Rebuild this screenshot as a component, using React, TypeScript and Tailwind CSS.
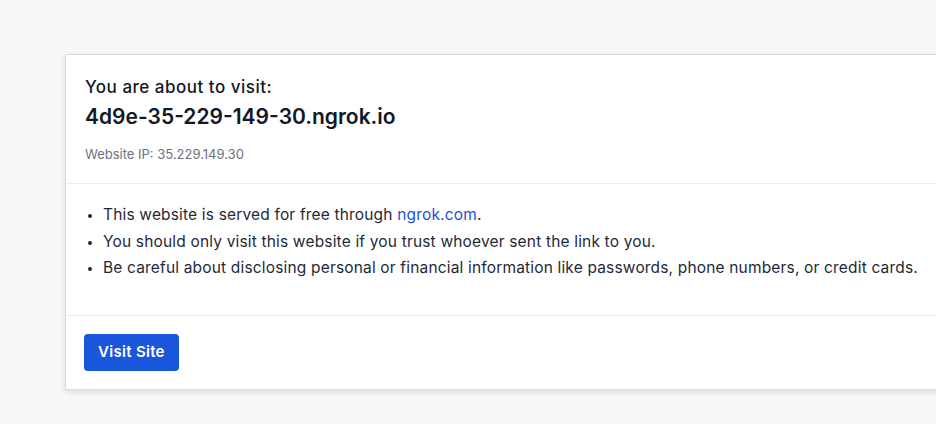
import React from "react";

const App: React.FC = () => {
  return (
    <div
      className="w-[936px] h-[424px] overflow-hidden bg-[#f8f8f8] pt-[54px] pl-[65px]"
      style={{ fontFamily: "Inter, 'Noto Sans', sans-serif" }}
    >
      <div className="w-[920px] bg-white border border-[#dcdcdc] shadow-[0_2px_6px_rgba(0,0,0,0.12)]">
        {/* header */}
        <div className="px-[19px] pt-[21px] pb-[20px] border-b border-[#ececec]">
          <p className="text-[17px] leading-[22px] font-medium text-[#111827] tracking-[0.5px]">You are about to visit:</p>
          <h1 className="mt-[5px] text-[21px] leading-[28px] font-semibold text-[#111827]">
            4d9e-35-229-149-30.ngrok.io
          </h1>
          <p className="mt-[14px] text-[13px] leading-[18px] text-[#6b7280]">Website IP: 35.229.149.30</p>
        </div>

        {/* notes */}
        <div className="px-[19px] pt-[18px] pb-[33px] border-b border-[#ececec]">
          <ul className="list-disc pl-[18px] text-[15.5px] leading-[26.5px] tracking-[0.17px] text-[#1f2937] marker:text-[12px]">
            <li>
              This website is served for free through{" "}
              <a href="#" className="text-[#1d4ed8]">ngrok.com</a>.
            </li>
            <li>You should only visit this website if you trust whoever sent the link to you.</li>
            <li>
              Be careful about disclosing personal or financial information like passwords, phone numbers, or credit cards.
            </li>
          </ul>
        </div>

        {/* action */}
        <div className="px-[18px] pt-[18px] pb-[18px]">
          <button className="h-[37px] px-[14px] rounded-[4px] bg-[#1a56db] text-white text-[15px] font-semibold tracking-[0.3px]">
            Visit Site
          </button>
        </div>
      </div>
    </div>
  );
};

export default App;
